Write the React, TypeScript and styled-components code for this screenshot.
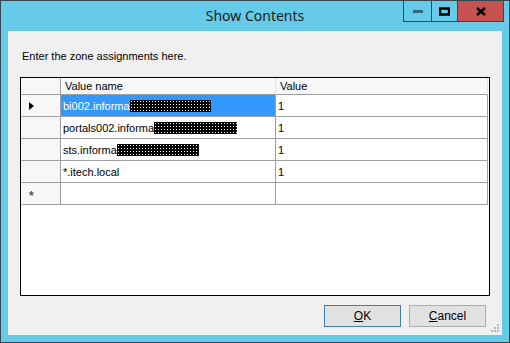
import React from 'react'
import styled, { createGlobalStyle } from 'styled-components'

const Global = createGlobalStyle`
  html, body {
    margin: 0;
    padding: 0;
    background: #ffffff;
  }
`

const Window = styled.div`
  width: 510px;
  height: 343px;
  box-sizing: border-box;
  border: 1px solid #37474f;
  background: #65cbe9;
  display: flex;
  flex-direction: column;
  padding: 0 7px 7px 7px;
`

const TitleBar = styled.div`
  height: 30px;
  flex: none;
  display: grid;
  grid-template-columns: 1fr auto 1fr;
  align-items: start;
  margin: 0 -7px;
`

const Title = styled.div`
  grid-column: 2;
  font-family: 'Noto Sans', 'Open Sans', sans-serif;
  font-size: 14px;
  color: #1c1c1c;
  line-height: 29px;
`

const Captions = styled.div`
  grid-column: 3;
  justify-self: end;
  display: flex;
  margin-right: 5px;
  border: 1px solid #37474f;
  border-top: none;
`

const CapButton = styled.div<{ $w: number; $close?: boolean }>`
  width: ${p => p.$w}px;
  height: 20px;
  display: flex;
  align-items: center;
  justify-content: center;
  background: ${p => (p.$close ? '#c75050' : 'transparent')};
  & + & {
    border-left: 1px solid #37474f;
  }
`

const Client = styled.div`
  flex: 1;
  background: #f0f0f0;
  display: flex;
  flex-direction: column;
  padding: 19px 12px 0 12px;
  position: relative;
  font-family: 'Liberation Sans', Arial, sans-serif;
  font-size: 11px;
  color: #000;
`

const Label = styled.div`
  margin-left: 2px;
  height: 13px;
  line-height: 13px;
`

const GridView = styled.div`
  margin-top: 14px;
  height: 219px;
  box-sizing: border-box;
  border: 1px solid #000;
  background: #fff;
  display: grid;
  grid-template-columns: 40px 215px 212px;
  grid-auto-rows: 22px;
  grid-template-rows: 17px;
  align-content: start;
`

const HeadCell = styled.div<{ $corner?: boolean }>`
  background: ${p => (p.$corner ? '#f7f7f7' : '#f9f9f9')};
  border-right: 1px solid ${p => (p.$corner ? '#a0a0a0' : '#e3e3e3')};
  border-bottom: 1px solid #a0a0a0;
  padding-left: 4px;
  line-height: 16px;
  color: #000;
`

const RowHead = styled.div`
  background: #f7f7f7;
  border-right: 1px solid #a0a0a0;
  border-bottom: 1px solid #a0a0a0;
  display: flex;
  align-items: center;
  padding-left: 8px;
`

const Cell = styled.div<{ $selected?: boolean }>`
  background: ${p => (p.$selected ? '#3399ff' : '#fff')};
  color: ${p => (p.$selected ? '#fff' : '#000')};
  border-right: 1px solid #a0a0a0;
  border-bottom: 1px solid #a0a0a0;
  display: flex;
  align-items: center;
  padding-left: 2px;
  white-space: nowrap;
`

const Redacted = styled.span<{ $w: number }>`
  display: inline-block;
  width: ${p => p.$w}px;
  height: 12px;
  background-color: #000;
  background-image: radial-gradient(circle, #fff 0.6px, transparent 0.9px);
  background-size: 3px 3px;
`

const Arrow = styled.span`
  width: 0;
  height: 0;
  border-top: 4px solid transparent;
  border-bottom: 4px solid transparent;
  border-left: 5px solid #000;
`

const NewMark = styled.span`
  font-size: 12px;
  font-weight: bold;
  color: #555;
  margin-top: 4px;
`

const Footer = styled.div`
  display: flex;
  justify-content: flex-end;
  gap: 8px;
  margin-top: 9px;
  margin-right: 4px;
`

const Button = styled.div<{ $default?: boolean }>`
  width: 77px;
  height: 22px;
  box-sizing: border-box;
  background: #e1e1e1;
  border: 1px solid ${p => (p.$default ? '#3c7fb1' : '#adadad')};
  display: flex;
  align-items: center;
  justify-content: center;
  font-size: 12px;
`

const Grip = styled.svg`
  position: absolute;
  right: 3px;
  bottom: 3px;
`

const rows = [
  { name: 'bi002.informa', hidden: 81, value: '1' },
  { name: 'portals002.informa', hidden: 83, value: '1' },
  { name: 'sts.informa', hidden: 82, value: '1' },
  { name: '*.itech.local', hidden: 0, value: '1' },
]

export default function App() {
  return (
    <>
      <Global />
      <Window>
        <TitleBar>
          <Title>Show Contents</Title>
          <Captions>
            <CapButton $w={27}>
              <svg width="10" height="3"><rect width="10" height="3" fill="#2f6b80" /></svg>
            </CapButton>
            <CapButton $w={25}>
              <svg width="11" height="9"><rect x="1" y="1.5" width="9" height="6" fill="none" stroke="#000" strokeWidth="2.5" /></svg>
            </CapButton>
            <CapButton $w={45} $close>
              <svg width="10" height="9"><path d="M1 1 L9 8 M9 1 L1 8" stroke="#000" strokeWidth="2.4" /></svg>
            </CapButton>
          </Captions>
        </TitleBar>
        <Client>
          <Label>Enter the zone assignments here.</Label>
          <GridView>
            <HeadCell $corner />
            <HeadCell>Value name</HeadCell>
            <HeadCell>Value</HeadCell>
            {rows.map((r, i) => (
              <React.Fragment key={i}>
                <RowHead>{i === 0 && <Arrow />}</RowHead>
                <Cell $selected={i === 0}>
                  {r.name}
                  {r.hidden > 0 && <Redacted $w={r.hidden} />}
                </Cell>
                <Cell>{r.value}</Cell>
              </React.Fragment>
            ))}
            <RowHead><NewMark>*</NewMark></RowHead>
            <Cell />
            <Cell />
          </GridView>
          <Footer>
            <Button $default><u>O</u>K</Button>
            <Button><u>C</u>ancel</Button>
          </Footer>
          <Grip width="8" height="8">
            {[[6, 0], [6, 3], [3, 3], [6, 6], [3, 6], [0, 6]].map(([x, y], i) => (
              <rect key={i} x={x} y={y} width="2" height="2" fill="#b5b5b5" />
            ))}
          </Grip>
        </Client>
      </Window>
    </>
  )
}
